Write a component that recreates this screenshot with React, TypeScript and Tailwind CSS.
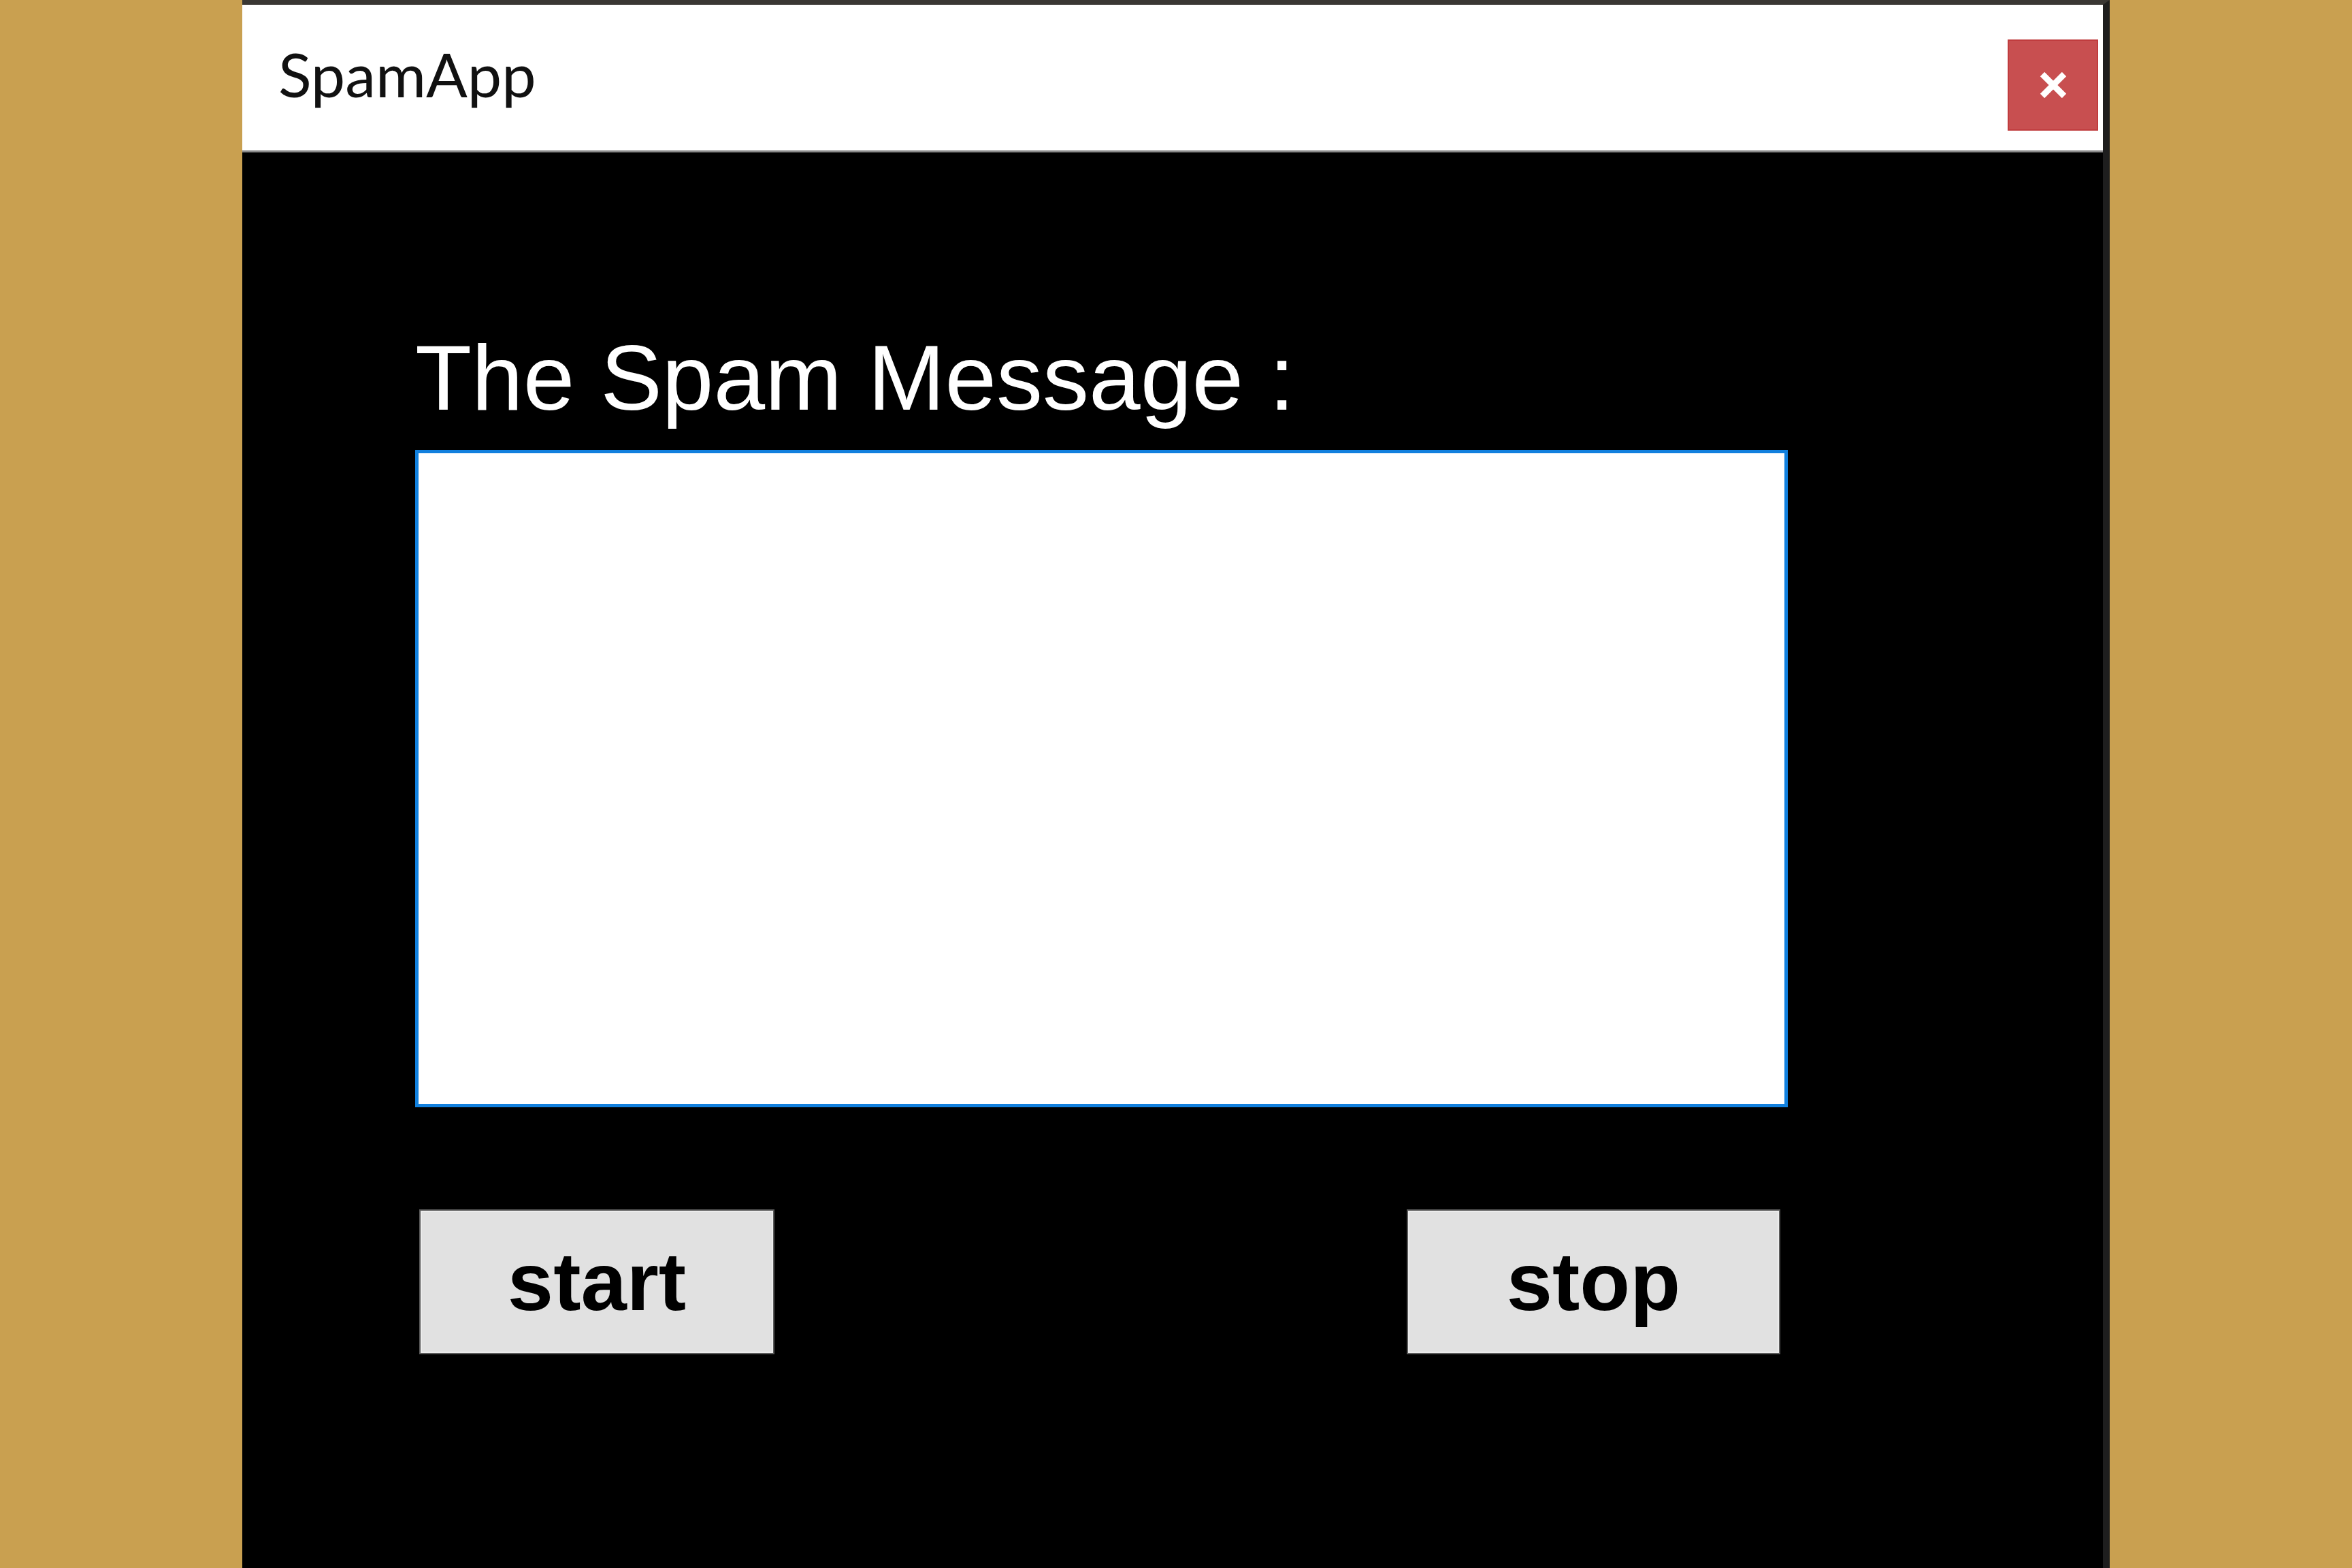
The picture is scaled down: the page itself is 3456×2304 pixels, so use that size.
import React from "react";

export default function App() {
  return (
    <div className="w-[3456px] h-[2304px] bg-[#c9a050] flex overflow-hidden">
      <div className="ml-[356px] w-[2744px] h-[2304px] flex flex-col bg-black border-t-[7px] border-t-[#3a3733] border-r-[10px] border-r-[#1e1e1e]">
        {/* Title bar */}
        <div className="h-[214px] bg-white flex items-start pl-[53px] pr-[7px] shrink-0">
          <div
            className="mt-[56px] text-[90px] leading-none text-[#111]"
            style={{ fontFamily: "Lato, 'Open Sans', sans-serif" }}
          >
            SpamApp
          </div>
          <div className="ml-auto mt-[51px] w-[133px] h-[134px] bg-[#c84f50] border-2 border-[#c03c3e] flex items-center justify-center">
            <svg width="40" height="38" viewBox="0 0 40 38">
              <line x1="4" y1="3" x2="36" y2="35" stroke="white" strokeWidth="9" strokeLinecap="butt" />
              <line x1="36" y1="3" x2="4" y2="35" stroke="white" strokeWidth="9" strokeLinecap="butt" />
            </svg>
          </div>
        </div>
        <div className="h-[3px] bg-[#8a8a8a] shrink-0" />
        {/* Body */}
        <div
          className="flex flex-col items-start pl-[254px] pt-[263px]"
          style={{ fontFamily: "'Liberation Sans', Arial, sans-serif" }}
        >
          <div className="text-[136px] leading-none text-white">The Spam Message :</div>
          <div className="mt-[38px] w-[2017px] h-[966px] bg-white border-[5px] border-[#1180de]" />
          <div className="mt-[150px] ml-[6px] w-[2000px] flex justify-between">
            <div className="w-[522px] h-[213px] bg-[#e1e1e1] border-2 border-[#5a5a5a] shadow-[inset_0_0_0_2px_#ececec] flex items-center justify-center">
              <span className="text-[121px] leading-none font-bold text-black">start</span>
            </div>
            <div className="w-[549px] h-[213px] bg-[#e1e1e1] border-2 border-[#5a5a5a] shadow-[inset_0_0_0_2px_#ececec] flex items-center justify-center">
              <span className="text-[121px] leading-none font-bold text-black">stop</span>
            </div>
          </div>
        </div>
      </div>
    </div>
  );
}
